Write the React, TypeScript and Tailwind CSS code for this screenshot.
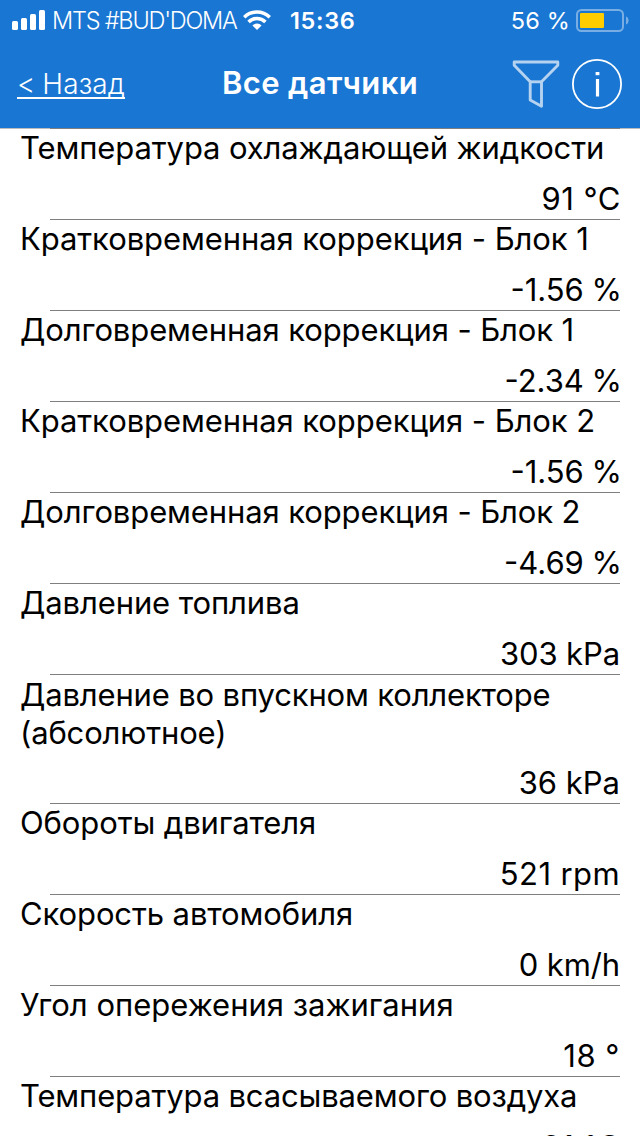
type Sensor = { name: string; value: string; nameClass?: string; valueClass?: string; tall?: boolean };

const sensors: Sensor[] = [
  { name: 'Температура охлаждающей жидкости', value: '91 °C', valueClass: 'tracking-[0.5px] -mr-px' },
  { name: 'Кратковременная коррекция - Блок 1', value: '-1.56 %', nameClass: 'tracking-[-0.08px]', valueClass: '-mr-[2px] [word-spacing:-1px]' },
  { name: 'Долговременная коррекция - Блок 1', value: '-2.34 %', valueClass: '-mr-[2px] [word-spacing:-1px]' },
  { name: 'Кратковременная коррекция - Блок 2', value: '-1.56 %', nameClass: 'tracking-[-0.08px]', valueClass: '-mr-[2px] [word-spacing:-1px]' },
  { name: 'Долговременная коррекция - Блок 2', value: '-4.69 %', valueClass: '-mr-[2px] [word-spacing:-1px]' },
  { name: 'Давление топлива', value: '303 kPa', valueClass: 'tracking-[-0.1px]' },
  { name: 'Давление во впускном коллекторе (абсолютное)', value: '36 kPa', nameClass: 'pt-px -mb-px tracking-[-0.16px]', tall: true },
  { name: 'Обороты двигателя', value: '521 rpm', valueClass: 'tracking-[0.4px]' },
  { name: 'Скорость автомобиля', value: '0 km/h', valueClass: 'tracking-[-0.1px]' },
  { name: 'Угол опережения зажигания', value: '18 °', nameClass: 'tracking-normal', valueClass: 'tracking-[0.5px]' },
  { name: 'Температура всасываемого воздуха', value: '31 °C', nameClass: 'tracking-[-0.15px]', valueClass: 'tracking-[0.5px] -mr-px' },
];

function SignalIcon() {
  return (
    <svg className="h-[20px] w-[34px]" viewBox="0 0 34 20" fill="currentColor">
      <rect x="0" y="11" width="6" height="9" rx="1.5" />
      <rect x="9" y="8" width="6" height="12" rx="1.5" />
      <rect x="18" y="4" width="6" height="16" rx="1.5" />
      <rect x="27" y="0" width="6" height="20" rx="1.5" />
    </svg>
  );
}

function WifiIcon() {
  return (
    <svg className="h-[20px] w-[28px]" viewBox="0 0 28 20" fill="none" stroke="currentColor" strokeWidth="3.5">
      <path d="M1.2 7.2a18.2 18.2 0 0 1 25.6 0" />
      <path d="M5.6 12a11.9 11.9 0 0 1 16.8 0" />
      <path d="M14 20l-4.6-4.5a6.5 6.5 0 0 1 9.2 0z" fill="currentColor" stroke="none" />
    </svg>
  );
}

function BatteryIcon() {
  return (
    <svg className="h-[23px] w-[53px]" viewBox="0 0 53 23" fill="none">
      <rect x="1" y="1" width="46" height="21" rx="4.5" stroke="#78aee4" strokeWidth="2" />
      <rect x="4" y="4" width="24" height="15" rx="1" fill="#ffcc00" />
      <path d="M50 7.5c3.4 1 3.4 7 0 8z" fill="#78aee4" />
    </svg>
  );
}

function FilterIcon() {
  return (
    <svg className="h-[50px] w-[48px]" viewBox="0 0 48 50" fill="none" stroke="#b5d2f0" strokeWidth="2.9" strokeLinejoin="round">
      <path d="M2.2 3h43.6v3.2L29.5 22.8v24.4L18.2 41V22.8L2.2 6.2z" />
      <path d="M18.2 22.8h11.3" />
    </svg>
  );
}

function InfoIcon() {
  return (
    <svg className="h-[50px] w-[50px]" viewBox="0 0 50 50" fill="none" stroke="currentColor">
      <circle cx="25" cy="25" r="24.1" strokeWidth="1.8" />
      <path d="M25.5 20v17.5" strokeWidth="3.2" />
      <path d="M25.5 13v3.2" strokeWidth="3.8" />
    </svg>
  );
}

export default function App() {
  return (
    <div className="flex h-[1136px] w-[640px] flex-col overflow-hidden bg-white font-['Inter',sans-serif] text-black">
      <header className="h-32 shrink-0 bg-[#1976d2] text-white">
        <div className="flex h-10 items-center pl-3 pr-[11px]">
          <SignalIcon />
          <span className="ml-[6px] w-[185px] whitespace-nowrap pt-px text-[23.5px] font-light leading-10 tracking-[-1.22px]">MTS #BUD'DOMA</span>
          <span className="ml-[6px] flex"><WifiIcon /></span>
          <span className="ml-[19px] whitespace-nowrap pt-px text-[23.5px] font-semibold leading-10 tracking-[0.65px]">15:36</span>
          <span className="ml-auto whitespace-nowrap pt-px text-[23.5px] leading-10 tracking-[0.2px]">56 %</span>
          <span className="ml-[6px] flex pt-px"><BatteryIcon /></span>
        </div>
        <nav className="grid h-[88px] grid-cols-[200px_240px_200px]">
          <div className="flex items-center pl-[17px]">
            <a className="mt-[2px] whitespace-nowrap border-b-2 border-white text-[28px] font-[350] leading-[26px] tracking-[0.1px] [word-spacing:-1px]">&lt; Назад</a>
          </div>
          <h1 className="flex items-center justify-center whitespace-nowrap pb-px text-[31px] font-semibold tracking-[0.4px]">Все датчики</h1>
          <div className="flex items-center justify-end gap-[12px] pr-[18px]">
            <FilterIcon />
            <InfoIcon />
          </div>
        </nav>
      </header>
      <main className="px-5">
        {sensors.map((s, i) => (
          <section key={i} className={s.tall ? 'h-[129px]' : 'h-[91px]'}>
            <div className={i === 0 ? '-mx-5 flex h-px bg-[#bcbcbc] pl-[50px] pr-5' : 'flex h-px pl-[30px]'}>
              <div className="h-px w-full bg-[#7f7f7f]" />
            </div>
            <h2 className={`text-[31px] leading-[38px] ${s.nameClass ?? 'tracking-[-0.11px]'}`}>{s.name}</h2>
            <p className={`pt-[13px] text-right text-[31px] leading-[38px] ${s.valueClass ?? ''}`}>{s.value}</p>
          </section>
        ))}
      </main>
    </div>
  );
}
